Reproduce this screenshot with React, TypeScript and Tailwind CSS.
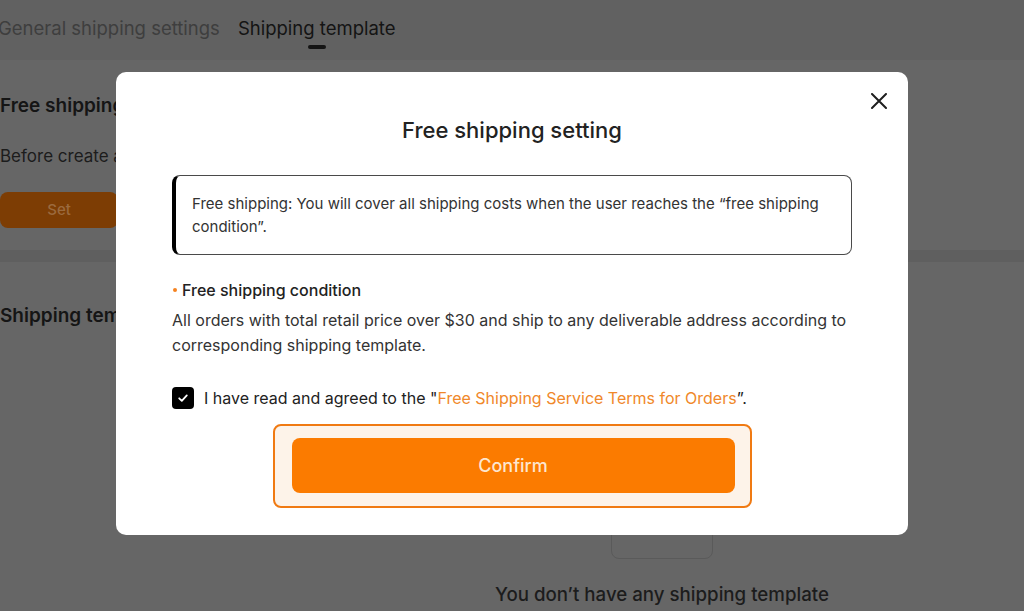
import React from 'react'

const font = { fontFamily: 'Inter, "Noto Sans", sans-serif' }

function CloseIcon() {
  return (
    <svg width="16" height="16" viewBox="0 0 16 16" fill="none">
      <path d="M1 1L15 15M15 1L1 15" stroke="#1f1f1f" strokeWidth="2" strokeLinecap="round" />
    </svg>
  )
}

function CheckIcon() {
  return (
    <svg width="12" height="12" viewBox="0 0 12 12" fill="none">
      <path d="M2.2 6.3L4.8 8.8L9.8 3.4" stroke="#fff" strokeWidth="1.8" strokeLinecap="round" strokeLinejoin="round" />
    </svg>
  )
}

function BackgroundPage() {
  return (
    <div className="flex h-full flex-col bg-[#666666]">
      {/* tabs */}
      <div className="flex h-[60px] shrink-0 items-start gap-[18px] bg-[#616161] pt-[16px]">
        <span className="-ml-[2px] whitespace-nowrap text-[18.5px] leading-[24px] text-[#3e3e3e]">General shipping settings</span>
        <div className="flex flex-col items-center">
          <span className="whitespace-nowrap text-[18.5px] leading-[24px] text-[#141414]">Shipping template</span>
          <span className="mt-[5px] h-[4px] w-[18px] rounded-full bg-[#141414]" />
        </div>
      </div>

      {/* free shipping card */}
      <div className="flex h-[190px] shrink-0 flex-col">
        <h3 className="mt-[34px] text-[19px] font-semibold leading-[24px] text-[#151515]">Free shipping</h3>
        <p className="mt-[26px] text-[17px] leading-[24px] text-[#1c1c1c]">
          Before create a shipping template, please set free shipping condition first.
        </p>
        <button className="mt-[24px] h-[36px] w-[118px] rounded-[8px] bg-[#7d3d04] text-[15px] font-medium text-[#9b6a3e]">
          Set
        </button>
      </div>

      <div className="h-[12px] shrink-0 bg-[#5f5f5f]" />

      {/* shipping templates card */}
      <div className="flex flex-1 flex-col">
        <h3 className="mt-[42px] text-[19px] font-semibold leading-[24px] text-[#151515]">Shipping templates</h3>
        <div className="mt-auto flex flex-col items-center pb-[4px] pl-[300px]">
          <div className="h-[56px] w-[102px] rounded-[8px] border border-[#5a5a5a]" />
          <p className="mt-[24px] text-[18.7px] font-medium leading-[24px] text-[#1c1c1c]">
            You don’t have any shipping template
          </p>
        </div>
      </div>
    </div>
  )
}

function FreeShippingModal() {
  return (
    <div className="relative w-[792px] rounded-[10px] bg-white px-14 pb-[27px] pt-[44px]">
      <button className="absolute right-[21px] top-[21px] flex h-4 w-4 items-center justify-center">
        <CloseIcon />
      </button>

      <h2 className="text-center text-[22px] font-medium leading-[28px] text-[#222]">Free shipping setting</h2>

      <div className="mt-[31px] rounded-[8px] border border-[#4a4a4a] border-l-[4px] border-l-black py-4 pl-4 pr-5">
        <p className="text-[15px] leading-[23px] text-[#333]">
          Free shipping: You will cover all shipping costs when the user reaches the “free shipping condition”.
        </p>
      </div>

      <div className="mt-[25px] flex items-center">
        <span className="ml-[1px] mr-[5px] h-[4px] w-[4px] rounded-full bg-[#f58220]" />
        <span className="text-[16px] font-medium leading-[20px] text-[#222]">Free shipping condition</span>
      </div>
      <p className="mt-2 text-[16px] leading-[25px] text-[#333]">
        All orders with total retail price over $30 and ship to any deliverable address according to corresponding shipping template.
      </p>

      <label className="mt-[29px] flex items-center gap-[10px]">
        <span className="flex h-[22px] w-[22px] items-center justify-center rounded-[4px] bg-black">
          <CheckIcon />
        </span>
        <span className="text-[16px] leading-[22px] text-[#222]">
          I have read and agreed to the "<span className="text-[#f0882a]">Free Shipping Service Terms for Orders</span>”.
        </span>
      </label>

      <div className="mx-auto mt-[15px] w-[479px] rounded-[8px] border-2 border-[#f07a12] bg-[#fdf3e9] pb-[13px] pl-[17px] pr-[15px] pt-[12px]">
        <button className="flex h-[55px] w-full items-center justify-center rounded-[8px] bg-[#fb7b00] text-[18px] font-medium text-[#fde6cf]">
          Confirm
        </button>
      </div>
    </div>
  )
}

export default function App() {
  return (
    <div className="relative h-[611px] w-[1024px] overflow-hidden" style={font}>
      <BackgroundPage />
      <div className="absolute inset-0 flex items-start justify-center pt-[72px]">
        <FreeShippingModal />
      </div>
    </div>
  )
}
